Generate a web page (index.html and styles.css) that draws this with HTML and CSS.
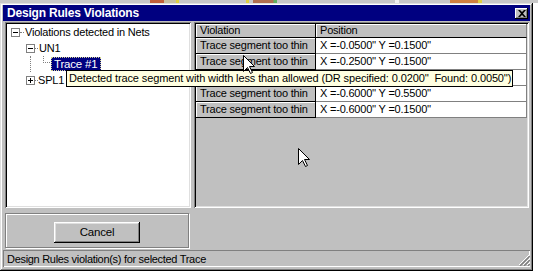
FILE: index.html
```html
<!DOCTYPE html>
<html>
<head>
<meta charset="utf-8">
<link rel="stylesheet" href="styles.css">
</head>
<body>
<div class="desk"></div>
<div class="window">
  <div class="titlebar">
    <span class="title">Design Rules Violations</span>
    <span class="close"><svg width="8" height="7" viewBox="0 0 8 7"><path d="M0 0h2l2 2 2-2h2L5 3.5 8 7H6L4 5 2 7H0l3-3.5z" fill="#000"/></svg></span>
  </div>
  <div class="main">
    <div class="tree">
      <div class="trow r0"><span class="box minus"></span><span class="hdot"></span><span class="tlabel">Violations detected in Nets</span></div>
      <div class="trow r1"><span class="box minus"></span><span class="hdot short"></span><span class="tlabel">UN1</span></div>
      <div class="trow r2"><span class="vline"></span><span class="elbow"></span><span class="tlabel sel">Trace #1</span></div>
      <div class="trow r3"><span class="box plus"></span><span class="hdot short"></span><span class="tlabel">SPL1</span></div>
    </div>
    <div class="gridpanel">
      <div class="grid">
        <div class="hcell">Violation</div><div class="hcell">Position</div>
        <div class="fcell">Trace segment too thin</div><div class="vcell">X =-0.0500'' Y =0.1500''</div>
        <div class="fcell">Trace segment too thin</div><div class="vcell">X =-0.2500'' Y =0.1500''</div>
        <div class="fcell"></div><div class="vcell"></div>
        <div class="fcell">Trace segment too thin</div><div class="vcell">X =-0.6000'' Y =0.5500''</div>
        <div class="fcell">Trace segment too thin</div><div class="vcell">X =-0.6000'' Y =0.1500''</div>
      </div>
    </div>
  </div>
  <div class="bottom">
    <div class="btnpanel">
      <div class="button">Cancel</div>
    </div>
  </div>
  <div class="status">
    <span class="stext">Design Rules violation(s) for selected Trace</span>
    <svg class="grip" width="12" height="12" viewBox="0 0 12 12">
      <path d="M11 1L1 11M11 5L5 11M11 9L9 11" stroke="#fff" stroke-width="1"/>
      <path d="M12 2L2 12M12 6L6 12M12 10L10 12" stroke="#808080" stroke-width="1.4"/>
    </svg>
  </div>
</div>
<div class="tooltip">Detected trace segment with width less than allowed (DR specified: 0.0200''&nbsp; Found: 0.0050'')</div>
<svg class="cursor c1" width="13" height="20" viewBox="0 0 13 20"><path d="M0.5 0.5V16.5L4.5 12.5L7.5 18.5L9.5 17.5L6.5 11.5H11.5Z" fill="#fff" stroke="#000" stroke-width="1"/></svg>
<svg class="cursor c2" width="13" height="20" viewBox="0 0 13 20"><path d="M0.5 0.5V16.5L4.5 12.5L7.5 18.5L9.5 17.5L6.5 11.5H11.5Z" fill="#fff" stroke="#000" stroke-width="1"/></svg>
</body>
</html>
```
FILE: styles.css
```css
* { box-sizing: border-box; }
body {
  margin: 0;
  background: #fff;
  width: 538px;
  height: 278px;
  overflow: hidden;
  position: relative;
  font-family: "Liberation Sans", Arial, sans-serif;
  font-size: 11px;
  letter-spacing: -0.2px;
  color: #000;
}
.desk {
  height: 3px;
  background: linear-gradient(90deg, #c8c8c8 0 150px, #c0603a 150px 164px, #c8c0a0 164px 176px, #e0d040 176px 179px, #c8c8c8 179px 246px, #e0d040 246px 249px, #c8c8c8 249px 253px, #b07050 253px 273px, #60b060 274px 277px, #c8c8c8 277px 395px, #f0f0f0 395px 399px, #c8c8c8 399px 450px, #d08040 450px 478px, #e0d040 478px 482px, #c8c8c8 482px);
}
.window {
  width: 533px;
  height: 268px;
  background: #c0c0c0;
  padding: 2px 3px 4px 3px;
  display: flex;
  flex-direction: column;
  box-shadow: inset -1px -1px #000, inset 1px 1px #dfdfdf, inset -2px -2px #808080, inset 2px 2px #fff;
}
.titlebar {
  height: 16px;
  background: #000080;
  color: #fff;
  display: flex;
  align-items: center;
  justify-content: space-between;
  padding: 0 2px 0 4px;
}
.title {
  font-weight: bold;
  font-size: 12px;
  letter-spacing: -0.2px;
}
.close {
  width: 13px;
  height: 11px;
  background: #c0c0c0;
  display: flex;
  align-items: center;
  justify-content: center;
  box-shadow: inset -1px -1px #000, inset 1px 1px #fff, inset -2px -2px #808080;
}
.main {
  margin-top: 1px;
  height: 186px;
  display: flex;
  gap: 3px;
  padding: 0 1px 0 2px;
}
.tree {
  width: 186px;
  background: #fff;
  padding: 2px 0 0 6px;
  box-shadow: inset 1px 1px #808080, inset -1px -1px #fff, inset 2px 2px #000, inset -2px -2px #dfdfdf;
}
.trow {
  height: 16px;
  display: flex;
  align-items: center;
  white-space: nowrap;
}
.box {
  width: 9px;
  height: 9px;
  border: 1px solid #808080;
  background: #fff;
  position: relative;
  flex: none;
}
.box::before {
  content: "";
  position: absolute;
  left: 1px;
  top: 3px;
  width: 5px;
  height: 1px;
  background: #000;
}
.box.plus::after {
  content: "";
  position: absolute;
  left: 3px;
  top: 1px;
  width: 1px;
  height: 5px;
  background: #000;
}
.hdot {
  width: 4px;
  height: 1px;
  border-top: 1px dotted #808080;
  flex: none;
}
.hdot.short { width: 3px; }
.r0 { padding-left: 0; }
.r0 .tlabel { margin-left: 1px; }
.r1, .r3 { padding-left: 15px; }
.r1 .tlabel { margin-left: 1px; }
.r3 .tlabel { margin-left: 0; }
.r2 { padding-left: 19px; align-items: stretch; }
.vline {
  width: 13px;
  border-left: 1px dotted #808080;
  flex: none;
}
.elbow {
  width: 7px;
  height: 7px;
  border-left: 1px dotted #808080;
  border-bottom: 1px dotted #808080;
  flex: none;
}
.r2 .tlabel { align-self: center; }
.tlabel { font-size: 11px; line-height: 14px; }
.tlabel.sel {
  background: #000080;
  color: #fff;
  padding: 0 3px 0 2px;
  height: 14px;
  border: 1px dotted #d0d090;
  line-height: 12px;
  margin-left: 1px;
  font-size: 11.5px;
}
.gridpanel {
  flex: 1;
  background: #c0c0c0;
  padding: 2px 2px 2px 2px;
  box-shadow: inset 1px 1px #808080, inset -1px -1px #fff, inset 2px 2px #000, inset -2px -2px #dfdfdf;
}
.grid {
  display: grid;
  grid-template-columns: 120px 211px;
  grid-template-rows: 14px repeat(5, 16px);
}
.hcell, .fcell {
  background: #c0c0c0;
  border-right: 1px solid #000;
  border-bottom: 1px solid #000;
  box-shadow: inset 1px 1px #fff;
  padding-left: 4px;
  line-height: 14px;
  white-space: nowrap;
  overflow: hidden;
}
.hcell { line-height: 13px; }
.hcell:nth-child(2) { border-right: 1px solid #808080; }
.vcell {
  background: #fff;
  border-right: 1px solid #808080;
  border-bottom: 1px solid #808080;
  padding-left: 4px;
  line-height: 15px;
  white-space: nowrap;
}
.bottom {
  height: 42px;
  padding: 5px 0 0 2px;
}
.btnpanel {
  width: 184px;
  height: 35px;
  border: 1px solid #808080;
  box-shadow: inset 1px 1px #fff, 1px 1px #fff;
  display: flex;
  justify-content: center;
  padding-top: 8px;
}
.button {
  width: 86px;
  height: 21px;
  background: #c0c0c0;
  text-align: center;
  line-height: 20px;
  font-size: 11.5px;
  box-shadow: inset -1px -1px #000, inset 1px 1px #fff, inset -2px -2px #808080, inset 2px 2px #dfdfdf;
}
.status {
  height: 17px;
  display: flex;
  align-items: center;
  justify-content: space-between;
  padding: 0 0 0 4px;
  box-shadow: inset 1px 1px #808080, inset -1px -1px #fff;
  font-size: 11px;
  letter-spacing: -0.3px;
}
.grip {
  align-self: flex-end;
  margin: 0 0 1px 0;
}
.tooltip {
  position: absolute;
  left: 66px;
  top: 70px;
  width: 447px;
  height: 17px;
  background: #ffffe1;
  border: 1px solid #000;
  padding-left: 2px;
  font-size: 11px;
  line-height: 15px;
  letter-spacing: -0.12px;
  white-space: nowrap;
}
.cursor { position: absolute; }
.c1 { left: 243px; top: 55px; }
.c2 { left: 298px; top: 148px; }
```
